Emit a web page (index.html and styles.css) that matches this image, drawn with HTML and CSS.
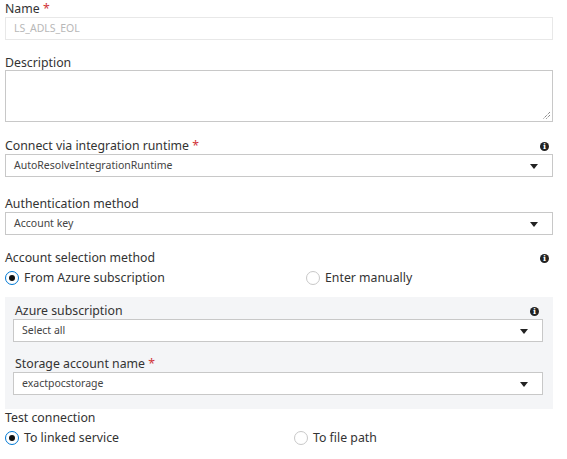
FILE: index.html
```html
<!DOCTYPE html>
<html>
<head>
<meta charset="utf-8">
<link rel="stylesheet" href="styles.css">
</head>
<body>
<div class="form">
  <div class="field f-name">
    <div class="label">Name <span class="req">*</span></div>
    <div class="input disabled">LS_ADLS_EOL</div>
  </div>
  <div class="field f-desc">
    <div class="label">Description</div>
    <div class="textarea">
      <svg class="grip" width="10" height="10" viewBox="0 0 10 10"><path d="M9 2 L2 9 M9 5 L5 9" stroke="#555" stroke-width="1" stroke-dasharray="1 1" fill="none"/></svg>
    </div>
  </div>
  <div class="field f-ir">
    <div class="label row"><span>Connect via integration runtime <span class="req">*</span></span><span class="info">i</span></div>
    <div class="input select"><span>AutoResolveIntegrationRuntime</span><span class="caret"></span></div>
  </div>
  <div class="field f-auth">
    <div class="label">Authentication method</div>
    <div class="input select"><span>Account key</span><span class="caret"></span></div>
  </div>
  <div class="field f-acct">
    <div class="label row"><span>Account selection method</span><span class="info">i</span></div>
    <div class="radios">
      <div class="radio checked"><span class="dot"></span>From Azure subscription</div>
      <div class="radio r2"><span class="dot"></span>Enter manually</div>
    </div>
  </div>
  <div class="panel">
    <div class="field p-sub">
      <div class="label row"><span>Azure subscription</span><span class="info">i</span></div>
      <div class="input select"><span>Select all</span><span class="caret"></span></div>
    </div>
    <div class="field p-sto">
      <div class="label">Storage account name <span class="req">*</span></div>
      <div class="input select"><span>exactpocstorage</span><span class="caret"></span></div>
    </div>
  </div>
  <div class="field f-test">
    <div class="label">Test connection</div>
    <div class="radios">
      <div class="radio checked"><span class="dot"></span>To linked service</div>
      <div class="radio r3"><span class="dot"></span>To file path</div>
    </div>
  </div>
</div>
</body>
</html>
```
FILE: styles.css
```css
html, body { margin: 0; padding: 0; background: #fff; }
body { font-family: "Segoe UI", "Noto Sans", "Open Sans", sans-serif; color: #323130; }
.form { width: 548px; padding-left: 5px; }
.label { font-size: 12.3px; line-height: 16px; height: 16px; color: #333; }
.label.row { display: flex; justify-content: space-between; align-items: center; }
.req { color: #d13438; }
.info { width: 9px; height: 9px; border-radius: 50%; background: #222; color: #fff; font-size: 8px; font-weight: bold; line-height: 9px; text-align: center; font-family: "DejaVu Serif", serif; margin-right: 4px; }
.input { box-sizing: border-box; height: 23px; border: 1px solid #c8c8c8; background: #fff; font-size: 10.5px; line-height: 21px; padding: 0 8px; color: #444; }
.input.disabled { border-color: #e8e8e8; color: #b8b8b8; }
.select { display: flex; justify-content: space-between; align-items: center; }
.caret { width: 0; height: 0; border-left: 4px solid transparent; border-right: 4px solid transparent; border-top: 5px solid #222; margin-right: 6px; margin-top: 2px; }
.textarea { box-sizing: border-box; height: 52px; border: 1px solid #c8c8c8; position: relative; }
.grip { position: absolute; right: 1px; bottom: 1px; }
.f-name { padding-top: 1px; }
.f-desc { margin-top: 15px; }
.f-desc .label { height: 15px; }
.f-ir { margin-top: 16px; }
.f-auth { margin-top: 19px; }
.f-acct { margin-top: 15px; }
.radios { display: flex; height: 19px; margin-top: 2px; align-items: center; font-size: 12.3px; color: #333; }
.radio { display: flex; align-items: center; }
.radio .dot { box-sizing: border-box; width: 14px; height: 14px; border-radius: 50%; border: 1px solid #c8c8c8; margin-right: 5px; display: inline-flex; align-items: center; justify-content: center; background: #fff; }
.radio.checked .dot { border: 1.5px solid #0078d4; }
.radio.checked .dot::after { content: ""; width: 6px; height: 6px; border-radius: 50%; background: #111; }
.radio.checked { width: 301px; }
.f-test .radio.checked { width: 289px; }
.panel { margin-top: 10px; width: 548px; background: #f4f5f7; padding: 6px 10px 14px 8px; box-sizing: border-box; }
.panel .label { padding-left: 2px; }
.p-sto { margin-top: 14px; }
.f-test { margin-top: 1px; }
.f-test .radios { margin-top: 2px; }
```
